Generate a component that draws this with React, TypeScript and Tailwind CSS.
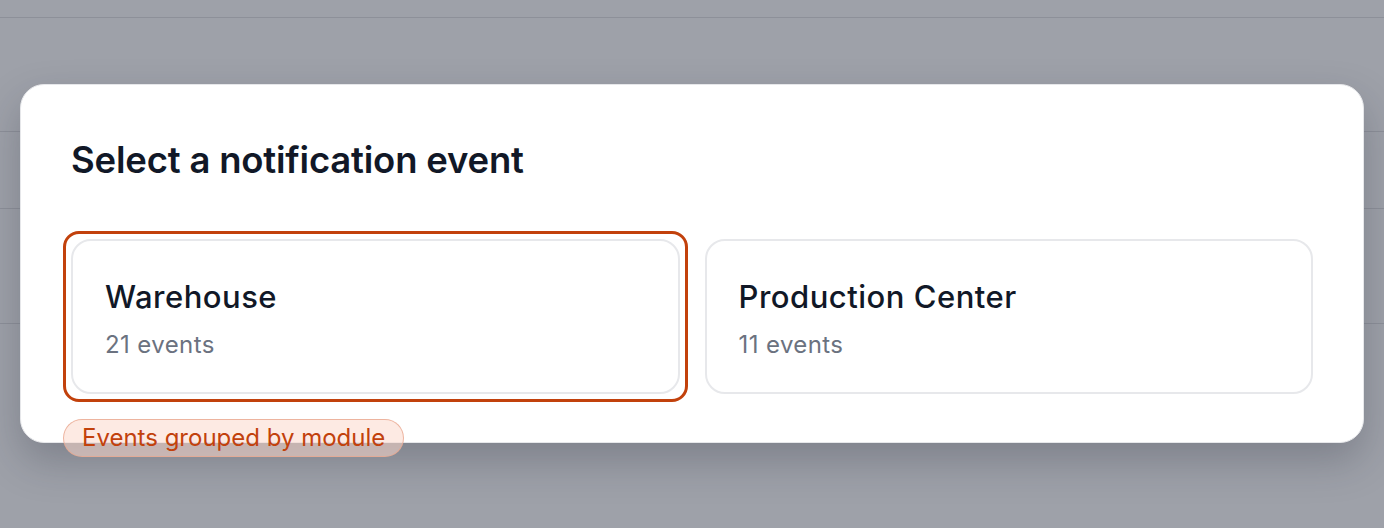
import React from 'react';

const modules = [
    { name: 'Warehouse', count: 21, selected: true },
    { name: 'Production Center', count: 11, selected: false },
];

const App: React.FC = () => {
    return (
        <div className="relative w-full h-[528px] overflow-hidden bg-[#9ea1a9] font-['Inter',sans-serif]">
            {/* Page behind the overlay */}
            <div className="flex flex-col">
                <div className="h-[18px] border-b border-[#8d9099]"></div>
                <div className="h-[114px] border-b border-[#8d9099]"></div>
                <div className="h-[77px] border-b border-[#8d9099]"></div>
                <div className="h-[115px] border-b border-[#8d9099]"></div>
            </div>

            {/* Dialog */}
            <div className="absolute left-[20px] top-[84px] w-[1344px] h-[359px] rounded-[24px] bg-white border border-[#e6e7ea] shadow-[0_18px_40px_rgba(30,35,50,0.25)] px-[50px] pt-[53px]">
                <h2 className="text-[36.5px] leading-[44px] font-semibold text-[#111827] tracking-[-0.2px]">
                    Select a notification event
                </h2>

                <div className="grid grid-cols-2 gap-[25px] mt-[57px]">
                    {modules.map((m) => (
                        <div key={m.name} className="relative">
                            {m.selected && (
                                <div className="absolute -inset-[8px] rounded-[16px] border-[3px] border-[#c2410c] pointer-events-none"></div>
                            )}
                            <div role="button" className="flex flex-col h-[155px] rounded-[20px] border-2 border-[#e7e8eb] bg-white px-[32px] pt-[38px] cursor-pointer">
                                <div className="text-[31px] leading-[36px] font-medium text-[#111827] tracking-[0.5px]">{m.name}</div>
                                <div className="mt-[15px] text-[24px] leading-[30px] text-[#6b7280] tracking-[0.4px]">{m.count} events</div>
                            </div>
                        </div>
                    ))}
                </div>

                {/* Hint badge */}
                <div className="absolute left-[42px] top-[334px] h-[38px] px-[18px] flex items-center rounded-full border border-[#e9a68f]/80 bg-[#fbd9cc]/55 text-[24px] leading-none text-[#c2410c]">
                    Events grouped by module
                </div>
            </div>
        </div>
    );
};

export default App;
